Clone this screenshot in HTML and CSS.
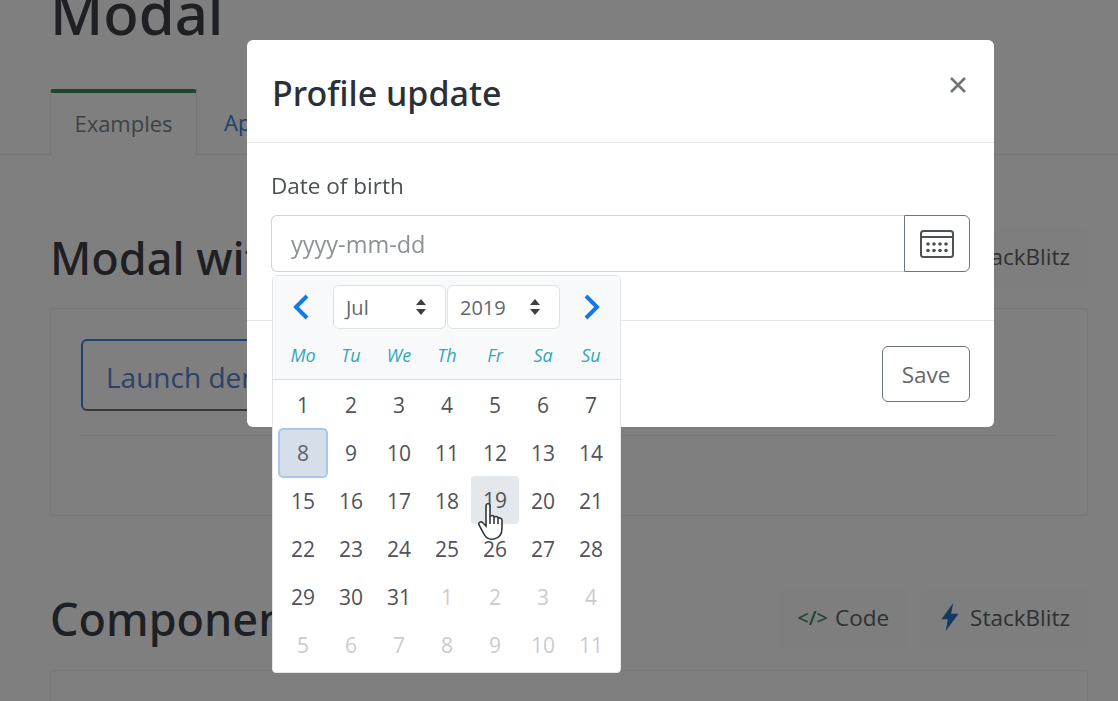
FILE: index.html
```html
<!doctype html>
<html lang="en">
<head>
    <meta charset="utf-8" />
    <title>Modal</title>
    <link rel="stylesheet" href="styles.css">
</head>
<body>

    <!-- page behind the modal, scrolled a little -->
    <div class="page">
        <h1 class="page-title">Modal</h1>
        <div class="tabs">
            <a class="tab tab-active">Examples</a>
            <a class="tab tab-link">Api</a>
        </div>

        <div class="section-head">
            <h2>Modal with datepicker</h2>
            <div class="section-actions">
                <a class="action">
                    <span class="code-icon">&lt;/&gt;</span> Code
                </a>
                <a class="action">
                    <svg class="bolt-icon" viewBox="0 0 20 26"><path d="M13 0 2 15h6L6 26l12-16h-7z"/></svg> StackBlitz
                </a>
            </div>
        </div>
        <div class="card">
            <button class="launch-button">Launch demo modal</button>
            <hr class="demo-rule">
        </div>

        <div class="section-head">
            <h2>Components as modal</h2>
            <div class="section-actions">
                <a class="action">
                    <span class="code-icon">&lt;/&gt;</span> Code
                </a>
                <a class="action">
                    <svg class="bolt-icon" viewBox="0 0 20 26"><path d="M13 0 2 15h6L6 26l12-16h-7z"/></svg> StackBlitz
                </a>
            </div>
        </div>
        <div class="card card-short"></div>
    </div>

    <div class="backdrop"></div>

    <div class="modal">
        <div class="modal-header">
            <h3>Profile update</h3>
            <svg class="close-icon" viewBox="0 0 16 16"><path d="M1 1l14 14M15 1 1 15"/></svg>
        </div>
        <div class="modal-body">
            <label class="field-label" for="dob">Date of birth</label>
            <div class="input-group">
                <input type="text" id="dob" placeholder="yyyy-mm-dd">
                <button class="calendar-button">
                    <svg class="calendar-icon" viewBox="0 0 34 28">
                        <rect x="1" y="1" width="32" height="26" rx="2.5"/>
                        <path d="M1 7h32"/>
                        <g class="calendar-dots">
                            <circle cx="8" cy="14" r="1.8"/><circle cx="14" cy="14" r="1.8"/><circle cx="20" cy="14" r="1.8"/><circle cx="26" cy="14" r="1.8"/>
                            <circle cx="8" cy="20.5" r="1.8"/><circle cx="14" cy="20.5" r="1.8"/><circle cx="20" cy="20.5" r="1.8"/><circle cx="26" cy="20.5" r="1.8"/>
                        </g>
                    </svg>
                </button>
            </div>
        </div>
        <div class="modal-footer">
            <button class="save-button">Save</button>
        </div>
    </div>

    <div class="datepicker">
        <div class="dp-header">
            <div class="dp-nav">
                <svg class="chevron" viewBox="0 0 18 26"><path d="M15 2 4 13l11 11"/></svg>
                <div class="dp-select">
                    <span>Jul</span>
                    <svg class="updown" viewBox="0 0 12 18"><path d="M6 1l5 6H1zM6 17l5-6H1z"/></svg>
                </div>
                <div class="dp-select">
                    <span>2019</span>
                    <svg class="updown" viewBox="0 0 12 18"><path d="M6 1l5 6H1zM6 17l5-6H1z"/></svg>
                </div>
                <svg class="chevron" viewBox="0 0 18 26"><path d="M3 2l11 11L3 24"/></svg>
            </div>
            <div class="dp-weekdays">
                <span>Mo</span><span>Tu</span><span>We</span><span>Th</span><span>Fr</span><span>Sa</span><span>Su</span>
            </div>
        </div>
        <div class="dp-days">
            <span>1</span><span>2</span><span>3</span><span>4</span><span>5</span><span>6</span><span>7</span>
            <span class="day-selected">8</span><span>9</span><span>10</span><span>11</span><span>12</span><span>13</span><span>14</span>
            <span>15</span><span>16</span><span>17</span><span>18</span><span class="day-hover">19</span><span>20</span><span>21</span>
            <span>22</span><span>23</span><span>24</span><span>25</span><span>26</span><span>27</span><span>28</span>
            <span>29</span><span>30</span><span>31</span><span class="day-out">1</span><span class="day-out">2</span><span class="day-out">3</span><span class="day-out">4</span>
            <span class="day-out">5</span><span class="day-out">6</span><span class="day-out">7</span><span class="day-out">8</span><span class="day-out">9</span><span class="day-out">10</span><span class="day-out">11</span>
        </div>
    </div>

    <!-- mouse pointer from the recording -->
    <svg class="hand-cursor" viewBox="0 0 26 38">
        <path d="M8 3c0-3 4-3 4 0v11c0-2 4-2 4 0v1c0-2 4-2 4 0v1c0-2 4-1 4 1v8c0 6-3 10-8 11-5 1-8-1-10-5L1 22c-1-3 2-4 4-2l3 3z"/>
        <path d="M12 14v7M16 15v6M20 16v5"/>
    </svg>

</body>
</html>
```

FILE: styles.css
```css
html, body {
    height: 100%;
    margin: 0;
    overflow: hidden;
}

body {
    font-family: "Open Sans", "Noto Sans", sans-serif;
    color: #495057;
    background-color: #fff;
}

.page {
    height: 724px;
    overflow: hidden;
    margin-top: -23px;
    padding: 0 30px 0 50px;
}

.page-title {
    margin: 0;
    font-family: "Noto Sans", sans-serif;
    font-size: 58px;
    line-height: 72px;
    font-weight: 500;
    color: #3c4046;
}

.tabs {
    display: flex;
    margin: 40px -30px 0 -50px;
    height: 65px;
    padding-left: 50px;
    border-bottom: 1px solid #ececec;
}

.tab {
    box-sizing: border-box;
    height: 66px;
    padding: 18px 27px 0;
    font-size: 22px;
    border: 1px solid #ececec;
    border-bottom: none;
}

.tab-active {
    border-top: 4px solid #3d8c5f;
    border-radius: 3px 3px 0 0;
    background-color: #fff;
    color: #7f8489;
    width: 147px;
    text-align: center;
    padding: 15px 0 0;
}

.tab-link {
    border: none;
    color: #3f7fe8;
}

.section-head {
    display: flex;
    justify-content: space-between;
    align-items: center;
    margin-top: 73px;
    height: 58px;
}

.section-head h2 {
    margin: 0;
    font-family: "Noto Sans", sans-serif;
    font-size: 45px;
    font-weight: 500;
    white-space: nowrap;
    color: #3c4046;
}

.section-actions {
    display: flex;
    gap: 14px;
}

.action {
    display: flex;
    align-items: center;
    gap: 7px;
    box-sizing: border-box;
    height: 58px;
    padding: 0 18px 2px;
    font-size: 22.5px;
    color: #5e6267;
    background-color: #fdfdfd;
    border-radius: 4px;
}

.code-icon {
    color: #3f8f62;
    font-size: 20px;
    font-weight: 600;
}

.bolt-icon {
    width: 22px;
    height: 28px;
    margin-right: 2px;
    fill: #2a72c0;
}

.card {
    box-sizing: border-box;
    height: 208px;
    margin-top: 22px;
    padding: 30px;
    border: 1px solid #eeeeee;
    border-radius: 4px;
}

.card-short {
    margin-top: 23px;
}

.launch-button {
    display: block;
    width: 300px;
    height: 72px;
    padding: 3px 23px 0;
    text-align: left;
    white-space: nowrap;
    font-family: inherit;
    font-size: 28px;
    color: #5c82d0;
    background-color: #fff;
    border: 2px solid #3f86dc;
    border-bottom-color: #6a7078;
    border-radius: 6px;
}

.demo-rule {
    margin: 24px 0 0;
    border: none;
    border-top: 1px solid #eeeeee;
}

.backdrop {
    position: fixed;
    inset: 0;
    background-color: rgba(0, 0, 0, 0.5);
}

.modal {
    position: absolute;
    left: 247px;
    top: 40px;
    width: 747px;
    height: 387px;
    display: flex;
    flex-direction: column;
    background-color: #fff;
    border-radius: 6px;
}

.modal-header {
    display: flex;
    justify-content: space-between;
    align-items: center;
    height: 103px;
    padding: 0 28px 0 25px;
    border-bottom: 1px solid #e4e6e8;
    box-sizing: border-box;
}

.modal-header h3 {
    margin: 0;
    padding-top: 3px;
    font-family: "Noto Sans", sans-serif;
    font-size: 34px;
    font-weight: 500;
    color: #2b3036;
}

.close-icon {
    width: 16px;
    height: 16px;
    margin-bottom: 12px;
    fill: none;
    stroke: #70757a;
    stroke-width: 2.6;
}

.modal-body {
    height: 178px;
    box-sizing: border-box;
    padding: 27px 24px 0;
    border-bottom: 1px solid #e4e6e8;
}

.field-label {
    display: block;
    font-size: 22.5px;
    line-height: 32px;
    color: #4b5055;
}

.input-group {
    display: flex;
    margin-top: 13px;
}

.input-group input {
    flex: 1;
    min-width: 0;
    box-sizing: border-box;
    height: 57px;
    padding: 0 19px;
    font-family: inherit;
    font-size: 23.5px;
    color: #495057;
    border: 1px solid #ced4da;
    border-right: none;
    border-radius: 6px 0 0 6px;
    outline: none;
}

.input-group input::placeholder {
    color: #8d9297;
}

.calendar-button {
    display: flex;
    align-items: center;
    justify-content: center;
    width: 66px;
    height: 57px;
    padding: 0;
    background-color: #fff;
    border: 1px solid #6c757d;
    border-radius: 0 6px 6px 0;
}

.calendar-icon {
    width: 34px;
    height: 28px;
    fill: none;
    stroke: #4c5157;
    stroke-width: 2;
}

.calendar-dots {
    fill: #4c5157;
    stroke: none;
}

.modal-footer {
    display: flex;
    justify-content: flex-end;
    align-items: center;
    flex: 1;
    padding: 0 24px;
}

.save-button {
    width: 88px;
    height: 56px;
    font-family: inherit;
    font-size: 22.5px;
    color: #62676c;
    background-color: #fff;
    border: 1px solid #6c757d;
    border-radius: 6px;
}

/* datepicker dropdown */
.datepicker {
    position: absolute;
    left: 272px;
    top: 275px;
    width: 349px;
    height: 398px;
    box-sizing: border-box;
    background-color: #fff;
    border: 1px solid #e4e6e8;
    border-radius: 4px;
}

.dp-header {
    height: 104px;
    box-sizing: border-box;
    background-color: #f8f9fa;
    border-bottom: 1px solid #d9dcdf;
}

.dp-nav {
    display: flex;
    align-items: center;
    height: 62px;
    padding: 0 19px;
    box-sizing: border-box;
    gap: 1px;
}

.chevron {
    width: 18px;
    height: 26px;
    fill: none;
    stroke: #1479e6;
    stroke-width: 4;
    flex: none;
}

.dp-nav .chevron:first-child {
    margin-right: 22px;
}

.dp-nav .chevron:last-child {
    margin-left: 22px;
}

.dp-select {
    display: flex;
    align-items: center;
    justify-content: space-between;
    box-sizing: border-box;
    width: 113.5px;
    height: 44px;
    padding: 0 18px 0 12px;
    font-size: 20px;
    color: #62676c;
    background-color: #fff;
    border: 1px solid #dfe2e5;
    border-radius: 6px;
}

.updown {
    width: 12px;
    height: 18px;
    fill: #3c4045;
}

.dp-weekdays {
    display: grid;
    grid-template-columns: repeat(7, 48px);
    padding-left: 6px;
}

.dp-weekdays span {
    text-align: center;
    font-size: 18px;
    font-style: italic;
    line-height: 34px;
    color: #35a5bb;
}

.dp-days {
    display: grid;
    grid-template-columns: repeat(7, 48px);
    grid-auto-rows: 48px;
    padding-left: 6px;
    margin-top: 1px;
}

.dp-days span {
    display: flex;
    align-items: center;
    justify-content: center;
    font-size: 21px;
    color: #4f5358;
    border-radius: 4px;
}

.dp-days .day-out {
    color: #c9cccf;
}

.dp-days .day-selected {
    background-color: #d6dfe9;
    box-shadow: 0 0 0 1px #a9c6ee, inset 0 0 0 1px #a9c6ee;
    color: #5e6368;
}

.dp-days .day-hover {
    margin: -1px 0 1px;
    background-color: #e4e7ec;
}

.hand-cursor {
    position: absolute;
    left: 478px;
    top: 503px;
    width: 26px;
    height: 38px;
    fill: #fff;
    stroke: #33363a;
    stroke-width: 1.6;
}
```
